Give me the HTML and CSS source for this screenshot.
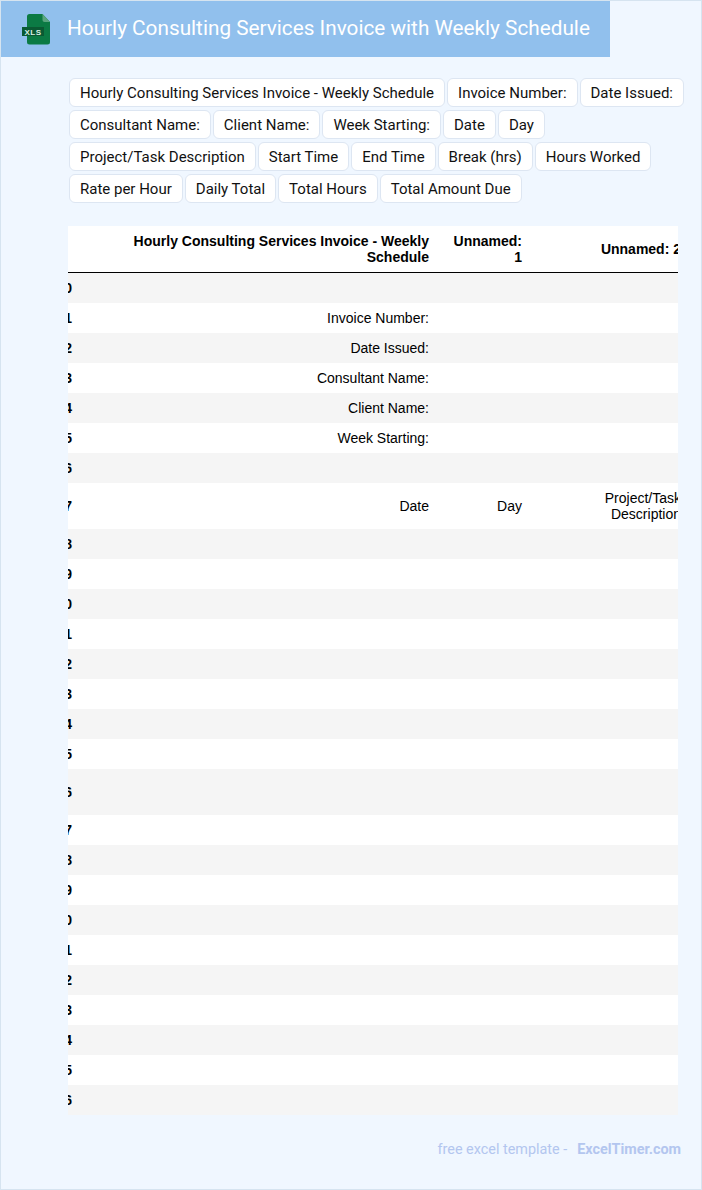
FILE: index.html
```html
<!DOCTYPE html>
<html lang="en">
<head>
<meta charset="utf-8">
<title>Hourly Consulting Services Invoice with Weekly Schedule</title>
<link rel="stylesheet" href="styles.css">
</head>
<body>
<div class="page">
  <header class="banner">
    <svg class="file-icon" viewBox="0 0 30 32" width="30" height="32" aria-hidden="true">
      <path d="M8.500 1h13l7.500 8v20a2.500 2.500 0 0 1-2.500 2.500h-18a2.500 2.500 0 0 1-2.500-2.500v-25.500a2.500 2.500 0 0 1 2.500-2.500z" fill="#0b7a44"/>
      <path d="M21.500 1v6a2 2 0 0 0 2 2h5.500z" fill="#5aa57f"/>
      <rect x="1" y="14" width="22" height="9" fill="#0a5a33"/>
      <text x="12" y="21.800" class="file-label" text-anchor="middle">XLS</text>
    </svg>
    <h1 class="title">Hourly Consulting Services Invoice with Weekly Schedule</h1>
  </header>

  <div class="chips">
    <span class="chip">Hourly Consulting Services Invoice - Weekly Schedule</span>
    <span class="chip">Invoice Number:</span>
    <span class="chip">Date Issued:</span>
    <span class="chip">Consultant Name:</span>
    <span class="chip">Client Name:</span>
    <span class="chip">Week Starting:</span>
    <span class="chip">Date</span>
    <span class="chip">Day</span>
    <span class="chip">Project/Task Description</span>
    <span class="chip">Start Time</span>
    <span class="chip">End Time</span>
    <span class="chip">Break (hrs)</span>
    <span class="chip">Hours Worked</span>
    <span class="chip">Rate per Hour</span>
    <span class="chip">Daily Total</span>
    <span class="chip">Total Hours</span>
    <span class="chip">Total Amount Due</span>
  </div>

  <div class="table-clip">
    <table class="sheet">
      <colgroup><col class="c-idx"><col class="c-a"><col class="c-b"><col class="c-c"></colgroup>
      <thead>
        <tr><th></th><th>Hourly Consulting Services Invoice - Weekly Schedule</th><th>Unnamed: 1</th><th>Unnamed: 2</th></tr>
      </thead>
      <tbody>
        <tr><th>0</th><td></td><td></td><td></td></tr>
        <tr><th>1</th><td>Invoice Number:</td><td></td><td></td></tr>
        <tr><th>2</th><td>Date Issued:</td><td></td><td></td></tr>
        <tr><th>3</th><td>Consultant Name:</td><td></td><td></td></tr>
        <tr><th>4</th><td>Client Name:</td><td></td><td></td></tr>
        <tr><th>5</th><td>Week Starting:</td><td></td><td></td></tr>
        <tr><th>6</th><td></td><td></td><td></td></tr>
        <tr><th>7</th><td>Date</td><td>Day</td><td>Project/Task Description</td></tr>
        <tr><th>8</th><td></td><td></td><td></td></tr>
        <tr><th>9</th><td></td><td></td><td></td></tr>
        <tr><th>10</th><td></td><td></td><td></td></tr>
        <tr><th>11</th><td></td><td></td><td></td></tr>
        <tr><th>12</th><td></td><td></td><td></td></tr>
        <tr><th>13</th><td></td><td></td><td></td></tr>
        <tr><th>14</th><td></td><td></td><td></td></tr>
        <tr><th>15</th><td></td><td></td><td></td></tr>
        <tr class="tall"><th>16</th><td></td><td></td><td></td></tr>
        <tr><th>17</th><td></td><td></td><td></td></tr>
        <tr><th>18</th><td></td><td></td><td></td></tr>
        <tr><th>19</th><td></td><td></td><td></td></tr>
        <tr><th>20</th><td></td><td></td><td></td></tr>
        <tr><th>21</th><td></td><td></td><td></td></tr>
        <tr><th>22</th><td></td><td></td><td></td></tr>
        <tr><th>23</th><td></td><td></td><td></td></tr>
        <tr><th>24</th><td></td><td></td><td></td></tr>
        <tr><th>25</th><td></td><td></td><td></td></tr>
        <tr><th>26</th><td></td><td></td><td></td></tr>
      </tbody>
    </table>
  </div>

  <footer class="credit">
    <span>free excel template -</span>
    <a class="credit-link" href="#">ExcelTimer.com</a>
  </footer>
</div>
</body>
</html>
```
FILE: styles.css
```css
* { box-sizing: border-box; }

html, body {
  margin: 0;
  padding: 0;
}

.page {
  width: 702px;
  height: 1190px;
  background: #f0f7ff;
  border: 1px solid #d6e4f0;
  overflow: hidden;
  font-family: Roboto, sans-serif;
}

.banner {
  display: flex;
  align-items: center;
  width: 609px;
  height: 56px;
  padding-left: 20px;
  background: #91c0ed;
}

.file-icon {
  flex: none;
  display: block;
}

.file-label {
  font-family: "Liberation Sans", sans-serif;
  font-size: 8px;
  font-weight: 700;
  letter-spacing: 0.5px;
  fill: #d9efe3;
}

.title {
  margin: 0 0 2px 16px;
  font-size: 20.76px;
  font-weight: 400;
  line-height: 24px;
  color: #fff;
  white-space: nowrap;
}

.chips {
  display: flex;
  flex-wrap: wrap;
  gap: 3px 2px;
  margin: 21px 15px 0 68px;
}

.chip {
  height: 29px;
  padding: 1px 10px 0;
  background: #fff;
  border: 1px solid #dde6f2;
  border-radius: 6px;
  font-size: 15px;
  line-height: 27px;
  color: #111;
  white-space: nowrap;
}

.table-clip {
  width: 610px;
  margin: 23px 0 0 67px;
  overflow: hidden;
  background: #fff;
}

.sheet {
  table-layout: fixed;
  width: 650px;
  margin-left: -30px;
  border-collapse: collapse;
  font-family: "Liberation Sans", Arial, sans-serif;
  font-size: 14px;
  line-height: 16px;
  color: #000;
}

.c-idx { width: 40px; }
.c-a { width: 358px; }
.c-b { width: 93px; }
.c-c { width: 159px; }

.sheet th,
.sheet td {
  padding: 7px 7px 7px 8px;
  text-align: right;
  vertical-align: middle;
}

.sheet th { font-weight: 700; }
.sheet td { font-weight: 400; }

.sheet tbody th { padding-right: 6px; }

.sheet thead tr { border-bottom: 1px solid #000; }

.sheet tbody tr { height: 30px; }
.sheet tbody tr:nth-child(odd) { background: #f5f5f5; }
.sheet tbody tr.tall { height: 46px; }

.credit {
  display: flex;
  justify-content: flex-end;
  gap: 10px;
  margin: 26px 20px 0 0;
  font-size: 14.4px;
  line-height: 17px;
  color: #b3c6ef;
}

.credit-link {
  font-weight: 700;
  color: #b3c6ef;
  text-decoration: none;
}
```
